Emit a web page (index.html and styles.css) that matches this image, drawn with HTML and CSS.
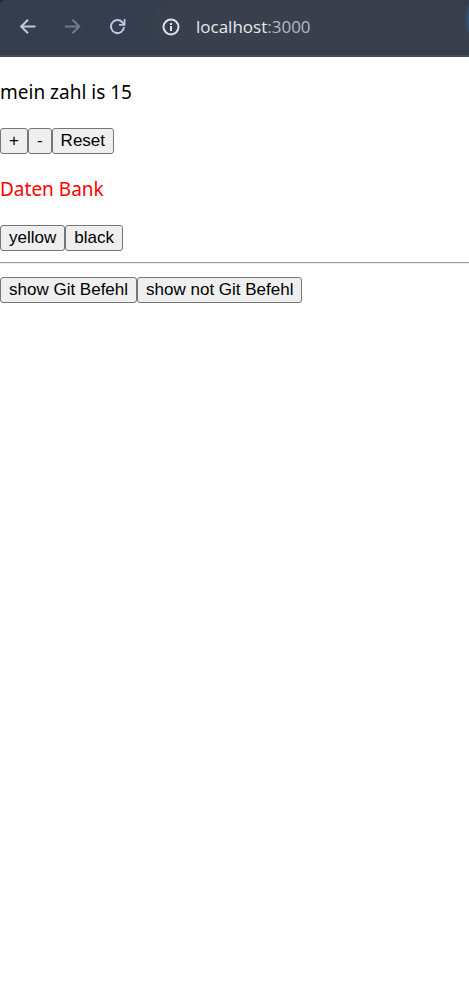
FILE: index.html
```html
<!DOCTYPE html>
<html lang="de">
<head>
<meta charset="utf-8">
<meta name="viewport" content="width=device-width, initial-scale=1">
<title>localhost:3000</title>
<link rel="stylesheet" href="styles.css">
</head>
<body>
<header class="browser">
  <div class="bar">
    <nav class="toolbar" aria-label="Browser">
      <button class="tool" type="button" aria-label="Back">
        <svg width="16" height="16" viewBox="0 0 16 16"><path d="M15.500 7.500H1.500M8 0.700L1.200 7.500l6.800 6.800"/></svg>
      </button>
      <button class="tool tool-off" type="button" aria-label="Forward" disabled>
        <svg width="16" height="16" viewBox="0 0 16 16"><path d="M0 7.500h14M7.500 0.700l6.800 6.800-6.800 6.800"/></svg>
      </button>
      <button class="tool" type="button" aria-label="Reload">
        <svg width="16" height="16" viewBox="0 0 16 16"><path d="M14 8A6.500 6.500 0 1 1 12.300 3.200L14 5"/><path class="head" d="M15.500 0v6.700H9V5h3L13.700 3.300V0z"/></svg>
      </button>
    </nav>
    <div class="address">
      <button class="info" type="button" aria-label="Site information">
        <svg width="18" height="18" viewBox="0 0 18 18"><circle cx="9" cy="9" r="7.500"/><path d="M9 8v5M9 5v2"/></svg>
      </button>
      <span class="url">localhost<span class="port">:3000</span></span>
    </div>
    <span class="profile"></span>
  </div>
</header>
<main class="page">
  <p class="text">mein zahl is 15</p>
  <div class="row"><button class="btn" type="button">+</button><button class="btn" type="button">-</button><button class="btn" type="button">Reset</button></div>
  <p class="text text-red">Daten Bank</p>
  <div class="row"><button class="btn" type="button">yellow</button><button class="btn" type="button">black</button></div>
  <hr class="rule">
  <div class="row"><button class="btn" type="button">show Git Befehl</button><button class="btn" type="button">show not Git Befehl</button></div>
</main>
</body>
</html>
```
FILE: styles.css
```css
* { box-sizing: border-box; }
body {
  margin: 0;
  background: #fff;
  color: #000;
  font-family: "Noto Sans", "Open Sans", sans-serif;
}
.browser { background: #222a36; }
.bar {
  position: relative;
  display: flex;
  align-items: center;
  height: 57px;
  padding: 0 0 1px 16px;
  overflow: hidden;
  background: #343e4f;
  border-bottom: 2px solid #484a54;
  border-top-left-radius: 6px;
}
.toolbar { display: flex; gap: 21px; }
.tool, .info {
  display: flex;
  align-items: center;
  justify-content: center;
  width: 24px;
  height: 24px;
  padding: 0;
  border: 0;
  background: none;
  color: #b9c7df;
}
.tool-off { color: #727b8a; }
svg { fill: none; stroke: currentColor; stroke-width: 2; }
.head { fill: currentColor; stroke: none; }
.address {
  display: flex;
  flex: 1;
  align-items: center;
  gap: 13px;
  height: 42px;
  margin-left: 20px;
  padding-left: 9px;
  border-radius: 21px 0 0 21px;
  background: #393f4d;
}
.info { color: #dde2ee; }
.url {
  color: #e6e9f0;
  font-family: "Open Sans", "Noto Sans", sans-serif;
  font-size: 17px;
  line-height: 24px;
}
.port { color: #b5bac5; }
.profile {
  position: absolute;
  top: -20px;
  right: -75px;
  width: 78px;
  height: 78px;
  border-radius: 50%;
  background: #2d5078;
}
.page { padding-top: 22px; }
.text {
  margin: 0 0 22px;
  font-size: 19px;
  line-height: 27px;
}
.text-red {
  margin-top: 22px;
  color: #f00;
}
.row { display: flex; flex-wrap: wrap; }
.btn {
  height: 26px;
  padding: 0 8px 1px;
  border: 1px solid #767676;
  border-radius: 3px;
  background: #efefef;
  color: #000;
  font-family: "Liberation Sans", Arial, sans-serif;
  font-size: 17px;
  line-height: 20px;
}
.rule {
  height: 2px;
  margin: 11px 0 13px;
  border: 0;
  border-top: 1px solid #9a9a9a;
  border-bottom: 1px solid #eee;
}
```
